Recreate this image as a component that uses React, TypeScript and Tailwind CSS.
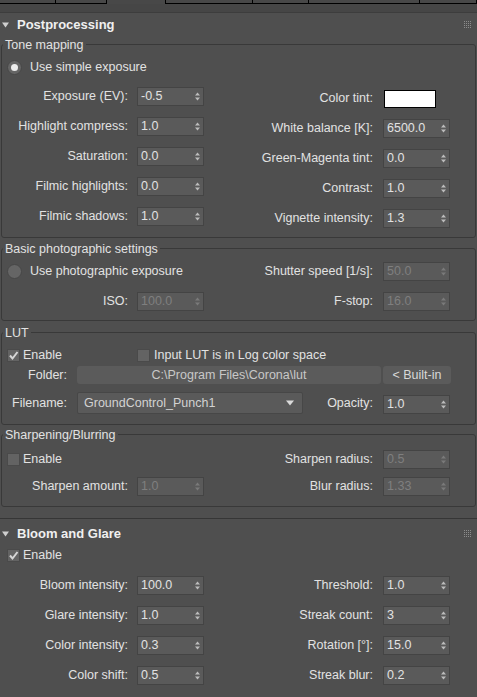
import type { ReactNode } from "react";

const font = "font-['Liberation_Sans',Arial,sans-serif]";

function Arrows({ dim }: { dim?: boolean }) {
  return (
    <svg width="5" height="9" viewBox="0 0 5 9" className={dim ? "fill-[#7a7a7a]" : "fill-[#bcbcbc]"}>
      <polygon points="0,3.5 2.5,0.5 5,3.5" />
      <polygon points="0,5.5 2.5,8.5 5,5.5" />
    </svg>
  );
}

function Spinner({ value, disabled }: { value: string; disabled?: boolean }) {
  return (
    <div className="flex h-[19px] w-[67px] shrink-0 items-center justify-between border border-[#444444] bg-[#5a5a5a] pl-[3px] pr-[3px]">
      <span className={disabled ? "text-[#7f7f7f]" : "text-[#e2e2e2]"}>{value}</span>
      <Arrows dim={disabled} />
    </div>
  );
}

function Field({
  label,
  value,
  disabled,
  right,
}: {
  label: string;
  value: string;
  disabled?: boolean;
  right?: boolean;
}) {
  return (
    <div className={right ? "flex h-[19px] items-center gap-[10px]" : "flex h-[19px] items-center gap-[9px]"}>
      <span className="whitespace-nowrap">{label}</span>
      <Spinner value={value} disabled={disabled} />
    </div>
  );
}

function Radio({ on }: { on?: boolean }) {
  return (
    <span className="flex size-[15px] shrink-0 items-center justify-center rounded-full border border-[#474747] bg-[#656565]">
      {on && <span className="size-[7px] rounded-full bg-[#ececec]" />}
    </span>
  );
}

function Check({ on }: { on?: boolean }) {
  return (
    <span className="flex size-[13px] shrink-0 items-center justify-center border border-[#4a4a4a] bg-[#636363]">
      {on && (
        <svg width="11" height="11" viewBox="0 0 11 11">
          <path d="M2 5.5 L4.5 8.5 L9.5 2" fill="none" stroke="#d6d6d6" strokeWidth="2" />
        </svg>
      )}
    </span>
  );
}

function Grip() {
  const dots = [];
  for (let i = 0; i < 4; i++)
    for (let j = 0; j < 4; j++)
      dots.push(<rect key={`${i}-${j}`} x={i * 2} y={j * 2} width="1" height="1" />);
  return (
    <svg width="8" height="8" viewBox="0 0 8 8" className="fill-[#8c8c8c]">
      {dots}
    </svg>
  );
}

function RolloutHeader({ title, className }: { title: string; className: string }) {
  return (
    <div className={`flex h-[16px] items-center pl-[2px] pr-[5px] ${className}`}>
      <svg width="7" height="6" viewBox="0 0 7 6" className="fill-[#cfcfcf]">
        <polygon points="0,0.5 7,0.5 3.5,5.5" />
      </svg>
      <span className="ml-[8px] text-[13px] font-bold leading-[16px] text-[#f0f0f0]">{title}</span>
      <span className="flex-1" />
      <Grip />
    </div>
  );
}

function Group({ title, className, children }: { title: string; className: string; children: ReactNode }) {
  return (
    <div className={`mx-px rounded-[3px] border border-[#393939] ${className}`}>
      <div className="-mt-[8px] ml-[1px] w-fit bg-[#4f4f4f] px-[2px] leading-[16px]">{title}</div>
      {children}
    </div>
  );
}

const tabs = [56, 51, 59, 87, 56, 111, 57];

export default function App() {
  return (
    <div className={`h-[697px] w-[477px] overflow-hidden bg-[#4f4f4f] text-[12.5px] leading-[19px] text-[#e2e2e2] ${font}`}>
      <div className="flex h-[4px] bg-[#484848]">
        {tabs.map((w, i) => (
          <div
            key={i}
            style={{ width: w }}
            className={i === 2 ? "h-full border-r border-black" : "h-full border-r border-b border-black"}
          />
        ))}
      </div>
      <div className="h-[9px] border-b border-[#3d3d3d] bg-[#464646]" />

      {/* Postprocessing */}
      <div className="border-b border-[#363636] pb-[11px]">
        <RolloutHeader title="Postprocessing" className="mt-[4px]" />

        <Group title="Tone mapping" className="mt-[11px] pb-[9px]">
          <div className="mt-[5px] flex h-[19px] items-center gap-[8px] pl-[5px]">
            <Radio on />
            <span>Use simple exposure</span>
          </div>
          <div className="mt-[10px] flex">
            <div className="flex w-[202px] flex-col items-end gap-[11px]">
              <Field label="Exposure (EV):" value="-0.5" />
              <Field label="Highlight compress:" value="1.0" />
              <Field label="Saturation:" value="0.0" />
              <Field label="Filmic highlights:" value="0.0" />
              <Field label="Filmic shadows:" value="1.0" />
            </div>
            <div className="flex w-[246px] flex-col items-end gap-[11px] pt-[2px]">
              <div className="flex h-[19px] items-center gap-[11px]">
                <span>Color tint:</span>
                <span className="mr-[14px] h-[18px] w-[52px] border border-black bg-white" />
              </div>
              <Field right label="White balance [K]:" value="6500.0" />
              <Field right label="Green-Magenta tint:" value="0.0" />
              <Field right label="Contrast:" value="1.0" />
              <Field right label="Vignette intensity:" value="1.3" />
            </div>
          </div>
        </Group>

        <Group title="Basic photographic settings" className="mt-[10px] pb-[9px]">
          <div className="mt-[5px] grid grid-cols-[202px_246px] gap-y-[11px]">
            <div className="flex h-[19px] items-center gap-[8px] pl-[5px]">
              <Radio />
              <span>Use photographic exposure</span>
            </div>
            <div className="flex justify-end">
              <Field right disabled label="Shutter speed [1/s]:" value="50.0" />
            </div>
            <div className="flex justify-end">
              <Field disabled label="ISO:" value="100.0" />
            </div>
            <div className="flex justify-end">
              <Field right disabled label="F-stop:" value="16.0" />
            </div>
          </div>
        </Group>

        <Group title="LUT" className="mt-[11px] pb-[10px]">
          <div className="mt-[5px] flex h-[19px] items-center pl-[5px]">
            <div className="flex w-[130px] items-center gap-[3px]">
              <Check on />
              <span>Enable</span>
            </div>
            <div className="flex items-center gap-[4px]">
              <Check />
              <span>Input LUT is in Log color space</span>
            </div>
          </div>
          <div className="mt-px flex h-[18px] items-center pr-[24px]">
            <span className="w-[65px] text-right">Folder:</span>
            <div className="ml-[10px] flex h-full flex-1 items-center justify-center rounded-[3px] bg-[#5b5b5b] text-[#c8c8c8]">
              C:\Program Files\Corona\lut
            </div>
            <div className="ml-[2px] flex h-full w-[68px] items-center justify-center rounded-[3px] bg-[#5b5b5b] text-[#d8d8d8]">
              &lt; Built-in
            </div>
          </div>
          <div className="mt-[8px] flex h-[22px] items-center pr-[25px]">
            <span className="w-[65px] text-right">Filename:</span>
            <div className="ml-[10px] flex h-full w-[226px] items-center justify-between rounded-[2px] border border-[#474747] bg-[#5a5a5a] pl-[6px] pr-[8px] text-[#d2d2d2]">
              <span>GroundControl_Punch1</span>
              <svg width="8" height="6" viewBox="0 0 8 6" className="fill-[#dadada]">
                <polygon points="0,0.5 8,0.5 4,5.5" />
              </svg>
            </div>
            <span className="flex-1" />
            <span>Opacity:</span>
            <div className="ml-[10px] self-end">
              <Spinner value="1.0" />
            </div>
          </div>
        </Group>

        <Group title="Sharpening/Blurring" className="mt-[9px] pb-[10px]">
          <div className="mt-[7px] grid grid-cols-[202px_246px] gap-y-[8px]">
            <div className="flex h-[19px] items-center gap-[3px] pl-[5px]">
              <Check />
              <span>Enable</span>
            </div>
            <div className="flex justify-end">
              <Field right disabled label="Sharpen radius:" value="0.5" />
            </div>
            <div className="flex justify-end">
              <Field disabled label="Sharpen amount:" value="1.0" />
            </div>
            <div className="flex justify-end">
              <Field right disabled label="Blur radius:" value="1.33" />
            </div>
          </div>
        </Group>
      </div>

      {/* Bloom and Glare */}
      <div>
        <RolloutHeader title="Bloom and Glare" className="mt-[7px]" />
        <div className="pl-[2px]">
          <div className="mt-[4px] flex h-[19px] items-center gap-[3px] pl-[5px]">
            <Check on />
            <span>Enable</span>
          </div>
          <div className="mt-[11px] grid grid-cols-[202px_246px] gap-y-[11px]">
            <div className="flex justify-end">
              <Field label="Bloom intensity:" value="100.0" />
            </div>
            <div className="flex justify-end">
              <Field right label="Threshold:" value="1.0" />
            </div>
            <div className="flex justify-end">
              <Field label="Glare intensity:" value="1.0" />
            </div>
            <div className="flex justify-end">
              <Field right label="Streak count:" value="3" />
            </div>
            <div className="flex justify-end">
              <Field label="Color intensity:" value="0.3" />
            </div>
            <div className="flex justify-end">
              <Field right label="Rotation [°]:" value="15.0" />
            </div>
            <div className="flex justify-end">
              <Field label="Color shift:" value="0.5" />
            </div>
            <div className="flex justify-end">
              <Field right label="Streak blur:" value="0.2" />
            </div>
          </div>
        </div>
      </div>
    </div>
  );
}
